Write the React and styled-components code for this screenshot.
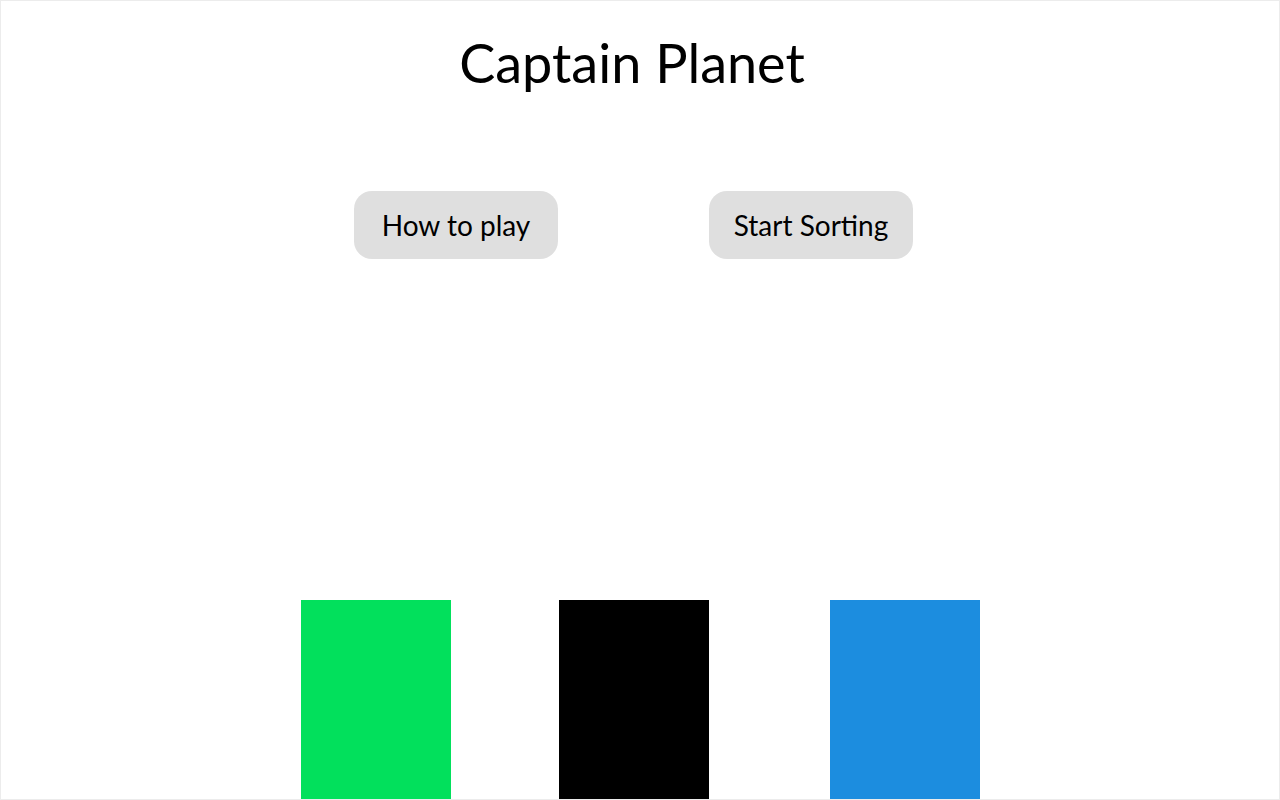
import React from 'react'
import styled, { createGlobalStyle } from 'styled-components'

const Global = createGlobalStyle`
  html, body {
    margin: 0;
    padding: 0;
    background: #fff;
  }
  body {
    font-family: 'Lato', 'Noto Sans', sans-serif;
    color: #000;
  }
`

const Page = styled.div`
  box-sizing: border-box;
  height: 800px;
  overflow: hidden;
  border: 1px solid #ececec;
  display: flex;
  flex-direction: column;
  align-items: center;
`

const Title = styled.h1`
  margin: 28px 16px 0 0;
  font-size: 54px;
  font-weight: 400;
  line-height: 68px;
  text-align: center;
`

const ButtonRow = styled.div`
  display: flex;
  gap: 151px;
  margin: 94px 13px 0 0;
`

const Button = styled.button`
  width: 204px;
  height: 68px;
  border: none;
  border-radius: 18px;
  background: #dfdfdf;
  font-family: inherit;
  font-size: 28px;
  color: #000;
  cursor: pointer;
`

const Bins = styled.div`
  display: flex;
  align-self: stretch;
  margin-top: auto;
  padding-left: 300px;
`

const Bin = styled.div`
  width: 150px;
  height: 199px;
  margin-left: ${p => p.$gap}px;
  background: ${p => p.$color};
`

const bins = [
  { color: '#02e05c', gap: 0 },
  { color: '#000000', gap: 108 },
  { color: '#1c8ddf', gap: 121 },
]

export default function App() {
  return (
    <>
      <Global />
      <Page>
        <Title>Captain Planet</Title>
        <ButtonRow>
          <Button>How to play</Button>
          <Button>Start Sorting</Button>
        </ButtonRow>
        <Bins>
          {bins.map((b, i) => (
            <Bin key={i} $color={b.color} $gap={b.gap} />
          ))}
        </Bins>
      </Page>
    </>
  )
}
